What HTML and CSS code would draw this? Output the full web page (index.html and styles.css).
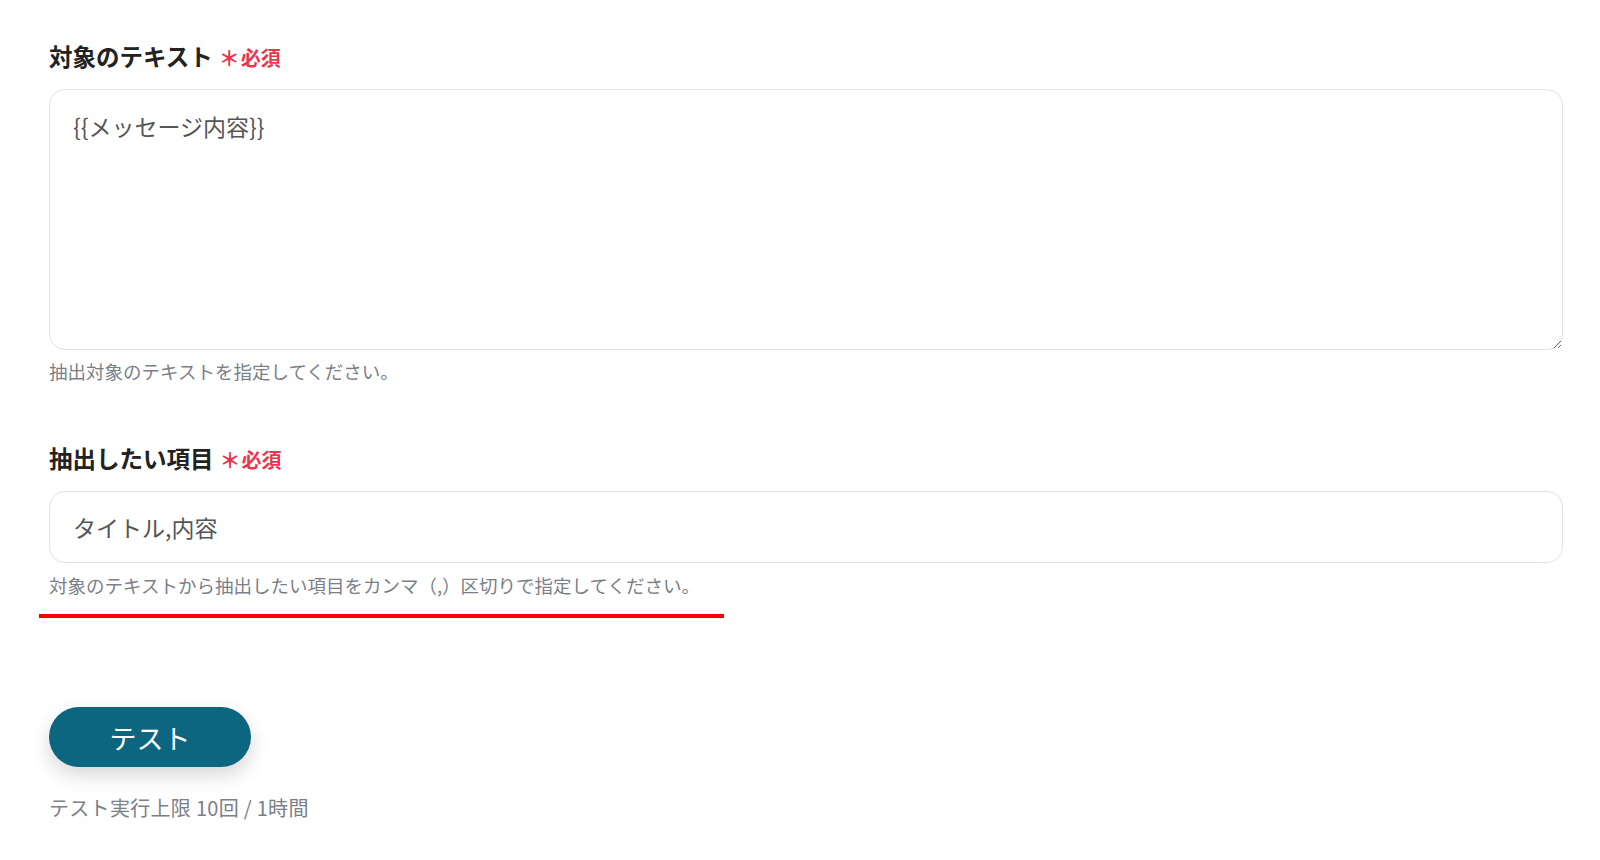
FILE: index.html
```html
<!DOCTYPE html>
<html lang="ja">
<head>
  <meta charset="UTF-8" />
  <title>テキスト抽出 | 設定</title>
  <link rel="stylesheet" href="styles.css">
</head>

<body>

  <div class="form">

    <!-- 対象のテキスト -->
    <div class="field">
      <div class="label">対象のテキスト<span class="req"><span class="star">＊</span>必須</span></div>
      <textarea class="textarea" readonly>{{メッセージ内容}}</textarea>
      <div class="help">抽出対象のテキストを指定してください。</div>
    </div>

    <!-- 抽出したい項目 -->
    <div class="field field-2">
      <div class="label">抽出したい項目<span class="req"><span class="star">＊</span>必須</span></div>
      <input class="input" type="text" value="タイトル,内容" readonly>
      <div class="help help-2">対象のテキストから抽出したい項目をカンマ（,）区切りで指定してください。</div>
      <div class="mark"></div>
    </div>

    <button class="btn">テスト</button>
    <div class="note">テスト実行上限 10回 / 1時間</div>

  </div>

</body>
</html>
```

FILE: styles.css
```css
body {
  margin: 0;
  background-color: #fff;
  color: #222;
  font-family: "Noto Sans CJK JP", "Noto Sans", sans-serif;
}

.form {
  padding: 41px 37px 0 49px;
}

.label {
  font-size: 23.5px;
  font-weight: bold;
  line-height: 30px;
  color: #222;
  margin-bottom: 16px;
}

.req {
  margin-left: 6px;
  font-size: 20px;
  color: #e8364e;
}

.star {
  display: inline-block;
  width: 18px;
  margin-right: 4px;
  font-size: 21px;
  font-weight: bold;
}

.textarea,
.input {
  display: block;
  box-sizing: border-box;
  width: 100%;
  border: 1.5px solid #dfe2e7;
  border-radius: 16px;
  padding: 0 23px;
  font-family: inherit;
  color: #555;
  outline: none;
}

.textarea {
  height: 261px;
  padding-top: 21px;
  font-size: 23px;
  line-height: 30px;
  resize: vertical;
}

.input {
  height: 72px;
  font-size: 23px;
}

.help {
  margin-top: 8px;
  font-size: 18.5px;
  line-height: 26px;
  color: #7b8088;
}

.help-2 {
  margin-top: 9px;
}

.field-2 {
  margin-top: 59px;
}

.mark {
  width: 685px;
  height: 4px;
  margin: 16px 0 0 -10px;
  background-color: #ff0000;
}

.btn {
  display: block;
  margin-top: 89px;
  width: 202px;
  height: 60px;
  border: none;
  border-radius: 30px;
  background-color: #0c6680;
  color: #fff;
  font-family: inherit;
  font-size: 27px;
  box-shadow: 0 8px 20px rgba(0, 0, 0, 0.16);
  cursor: pointer;
}

.note {
  margin-top: 28px;
  font-size: 20px;
  letter-spacing: 0.3px;
  line-height: 26px;
  color: #7b8088;
}
```
